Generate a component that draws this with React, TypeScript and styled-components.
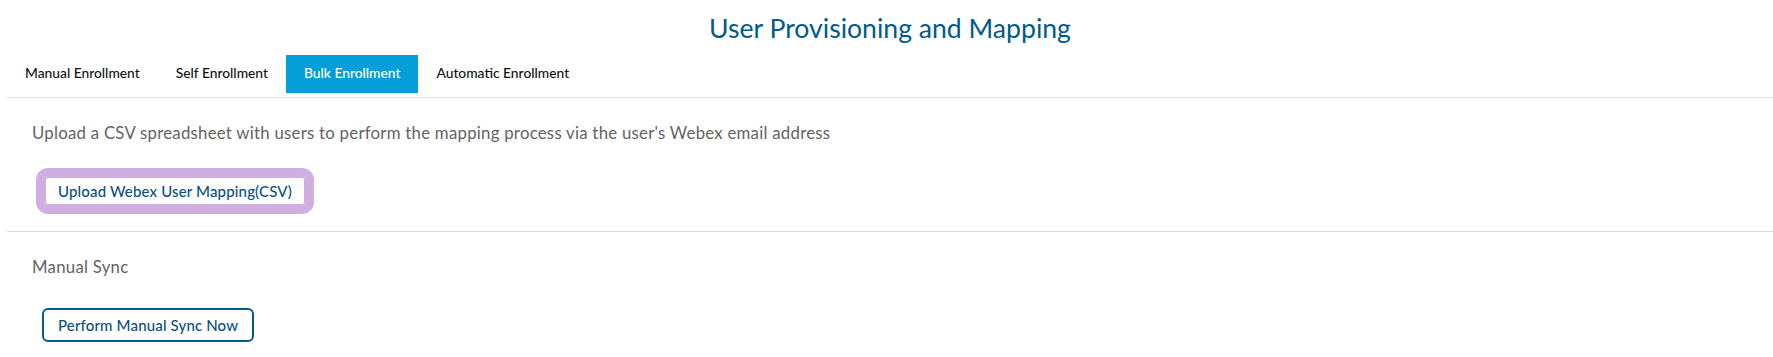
import React from "react";
import styled, { createGlobalStyle } from "styled-components";

const GlobalStyle = createGlobalStyle`
  html, body {
    margin: 0;
    padding: 0;
    background: #ffffff;
  }
  body {
    font-family: Lato, "Open Sans", Arial, sans-serif;
  }
  * { box-sizing: border-box; }
`;

const Page = styled.div`
  padding-left: 7px;
  width: 100%;
`;

const Title = styled.h1`
  margin: 0;
  padding-top: 2px;
  height: 55px;
  line-height: 53px;
  text-align: center;
  font-size: 26.6px;
  font-weight: 400;
  color: #005a8c;
`;

const TabBar = styled.div`
  display: flex;
  padding-bottom: 4px;
  border-bottom: 1px solid #dcdcdc;
`;

const Tab = styled.div<{ $active?: boolean }>`
  height: 38px;
  line-height: 35px;
  padding: 0 18px 3px;
  font-size: 13.8px;
  font-weight: 500;
  color: ${(p) => (p.$active ? "#ffffff" : "#121212")};
  background: ${(p) => (p.$active ? "#049fd9" : "transparent")};
  cursor: pointer;
`;

const Section = styled.section<{ $last?: boolean }>`
  padding: 25px 25px ${(p) => (p.$last ? "13px" : "23px")};
  border-bottom: ${(p) => (p.$last ? "none" : "1px solid #dcdcdc")};
`;

const Text = styled.p`
  margin: 0 0 31px;
  font-size: 16.8px;
  letter-spacing: 0.25px;
  line-height: 20px;
  color: #636363;
`;

const Button = styled.button<{ $focused?: boolean }>`
  display: inline-block;
  height: 34px;
  margin-left: 10px;
  padding: 0 14px;
  font-family: Lato, "Open Sans", Arial, sans-serif;
  font-size: 15px;
  font-weight: 500;
  letter-spacing: 0.15px;
  color: #0b4f7e;
  background: #ffffff;
  border: 2px solid ${(p) => (p.$focused ? "#cfaee2" : "#005a8c")};
  border-radius: 6px;
  box-shadow: ${(p) =>
    p.$focused ? "0 0 0 6px #cfaee2, inset 0 0 0 2px #cfaee2" : "none"};
  cursor: pointer;
`;

export default function App() {
  const tabs = [
    "Manual Enrollment",
    "Self Enrollment",
    "Bulk Enrollment",
    "Automatic Enrollment",
  ];
  return (
    <>
      <GlobalStyle />
      <Page>
        <Title>User Provisioning and Mapping</Title>
        <TabBar>
          {tabs.map((t) => (
            <Tab key={t} $active={t === "Bulk Enrollment"}>
              {t}
            </Tab>
          ))}
        </TabBar>
        <Section>
          <Text>
            Upload a CSV spreadsheet with users to perform the mapping process
            via the user's Webex email address
          </Text>
          <Button $focused>Upload Webex User Mapping(CSV)</Button>
        </Section>
        <Section $last>
          <Text>Manual Sync</Text>
          <Button>Perform Manual Sync Now</Button>
        </Section>
      </Page>
    </>
  );
}
